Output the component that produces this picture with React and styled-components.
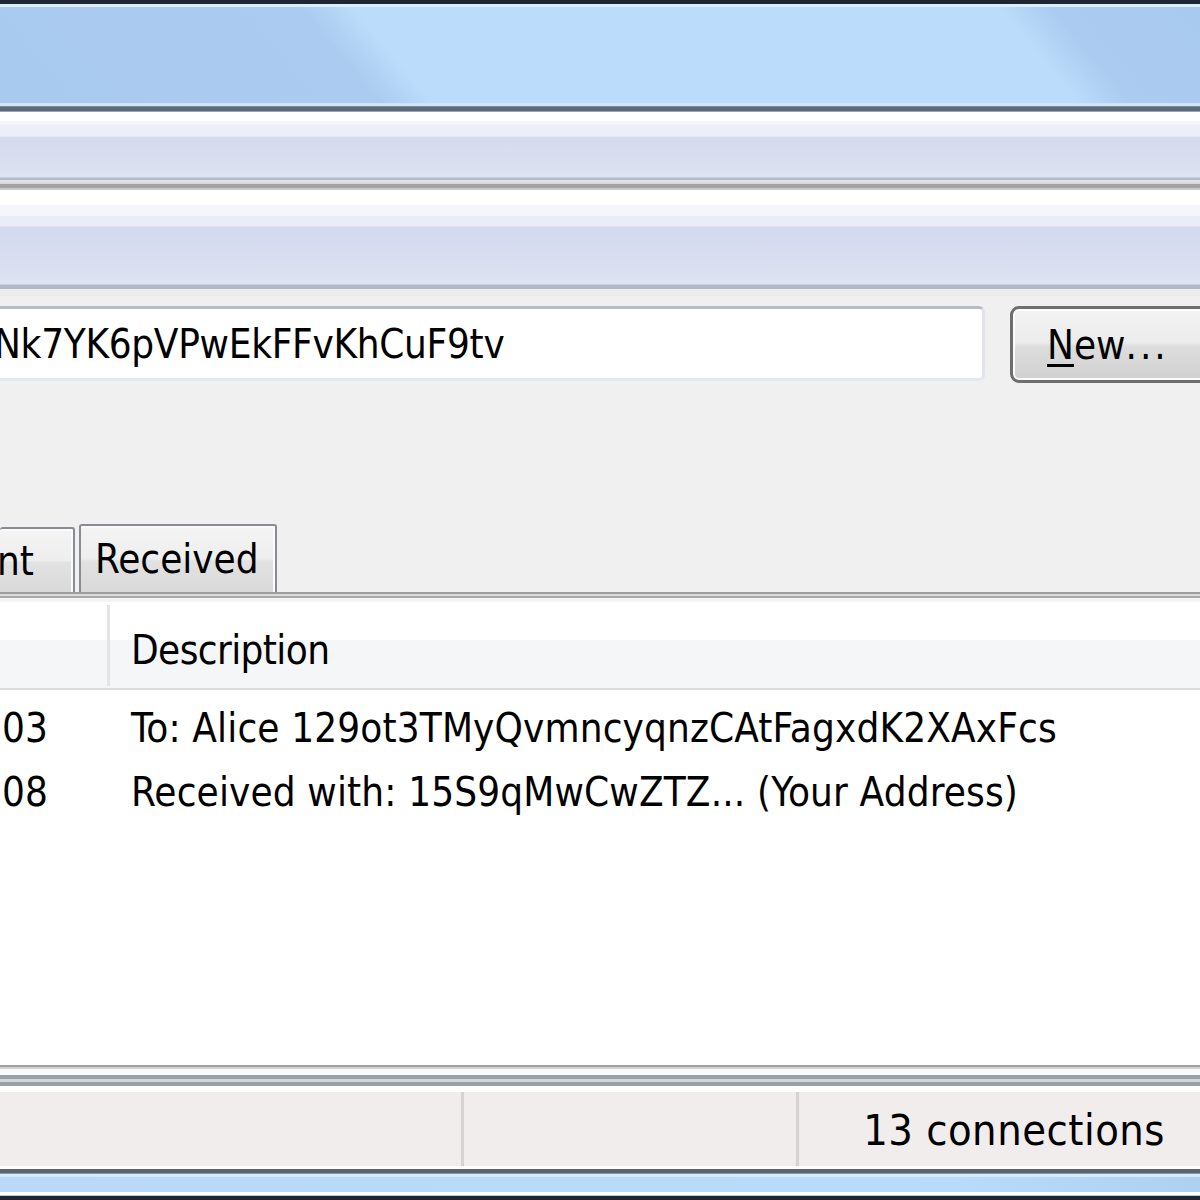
import React from "react";
import styled, { createGlobalStyle } from "styled-components";

const GlobalStyle = createGlobalStyle`
  html, body { margin: 0; padding: 0; background: #f0f0f0; }
  #root { width: 1200px; height: 1200px; }
`;

const Window = styled.div`
  width: 1200px;
  height: 1200px;
  overflow: hidden;
  display: flex;
  flex-direction: column;
  background: #f0f0f0;
  font-family: "DejaVu Sans Condensed", "DejaVu Sans", sans-serif;
  font-stretch: condensed;
  font-size: 40px;
  letter-spacing: 0;
  color: #000;
`;

const TitleBar = styled.div`
  flex: none;
  height: 112px;
  background:
    linear-gradient(
      to bottom,
      #1d2731 0 4px,
      #dcecfa 4px 7px,
      transparent 7px 103px,
      #cfe4f8 103px 106px,
      #7d8c9a 106px 107px,
      #5b6a78 107px 111px,
      #9aa7b3 111px 112px
    ),
    linear-gradient(
      50deg,
      #a9caef 0%,
      #abcbf0 30%,
      #bcdcfb 34%,
      #bcdcfb 84%,
      #abcbf0 88%,
      #a9caef 100%
    );
`;

const Rule = styled.div`
  flex: none;
  height: ${(p) => p.$h}px;
  background: ${(p) => p.$bg};
`;

const MenuBar = styled.div`
  flex: none;
  height: 70px;
  background: linear-gradient(
    to bottom,
    #ffffff 0 9px,
    #f4f6fb 9px 13px,
    #eceff7 13px 24px,
    #d5dbee 25px,
    #d9dfef 50px,
    #dfe4f3 65px,
    #b4bbca 66px 68px,
    #e3e3e3 68px 70px
  );
`;

const ToolBar = styled.div`
  flex: none;
  height: 106px;
  background: linear-gradient(
    to bottom,
    #ffffff 0 15px,
    #f4f6fb 15px 26px,
    #eaedf7 26px 36px,
    #d4daee 37px,
    #d8deef 70px,
    #dee3f3 94px,
    #b1b8c6 95px 99px,
    #ececec 99px 106px
  );
`;

const Content = styled.div`
  flex: none;
  height: 296px;
  box-sizing: border-box;
  padding-top: 10px;
  display: flex;
  flex-direction: column;
`;

const AddressRow = styled.div`
  display: flex;
  gap: 25px;
  height: 77px;
  margin: 0 -14px 0 -12px;
`;

const AddressField = styled.div`
  flex: 1;
  height: 75px;
  box-sizing: border-box;
  display: flex;
  align-items: center;
  padding-left: 3px;
  letter-spacing: -0.3px;
  background: #ffffff;
  border: 3px solid #e2e3ea;
  border-top-color: #b9bcc3;
  border-bottom-color: #e3e9ef;
  border-radius: 6px;
  white-space: nowrap;
  overflow: hidden;
`;

const Button = styled.div`
  flex: none;
  width: 204px;
  height: 77px;
  box-sizing: border-box;
  display: flex;
  align-items: center;
  padding-left: 34px;
  border: 3px solid #6e6e6e;
  border-radius: 9px;
  background: linear-gradient(#f3f3f3, #ececec 47%, #dddddd 53%, #d0d0d0);
  box-shadow: inset 0 0 0 2px #fbfbfb;
  white-space: nowrap;
`;

const Mnemonic = styled.span`
  text-decoration: underline;
  text-decoration-thickness: 3px;
  text-underline-offset: 5px;
`;

const Dots = styled.span`
  letter-spacing: 3px;
`;

const TabStrip = styled.div`
  margin-top: auto;
  height: 68px;
  display: flex;
  align-items: flex-end;
  gap: 4px;
`;

const Tab = styled.div`
  flex: none;
  box-sizing: border-box;
  width: ${(p) => p.$w}px;
  height: ${(p) => p.$h}px;
  display: flex;
  align-items: center;
  padding-left: ${(p) => p.$pad}px;
  border: 2px solid #898c95;
  border-bottom: none;
  ${(p) => (p.$cut ? "border-left: none;" : "")}
  border-radius: 3px 3px 0 0;
  background: linear-gradient(#f4f4f4, #eeeeee 50%, #e2e2e2 53%, #d9d9d9);
  box-shadow: inset 0 2px 0 #fbfbfb, inset -2px 0 0 #fbfbfb;
  white-space: nowrap;
  overflow: hidden;
`;

const TabLabel = styled.span`
  margin-left: ${(p) => p.$shift || 0}px;
`;

const List = styled.div`
  flex: 1;
  display: flex;
  flex-direction: column;
  background: #ffffff;
`;

const ListHeader = styled.div`
  flex: none;
  height: 88px;
  box-sizing: border-box;
  display: grid;
  grid-template-columns: 110px 1fr;
  background: linear-gradient(#ffffff 0 38px, #f5f6f7 38px);
  border-bottom: 2px solid #dadbdc;
`;

const HeaderCell = styled.div`
  box-sizing: border-box;
  padding: 10px 0 0 ${(p) => p.$pad}px;
  line-height: 76px;
  letter-spacing: -0.6px;
  ${(p) => (p.$sep ? "border-right: 3px solid #e4e4e4; margin: 3px 0 2px;" : "")}
`;

const ListBody = styled.div`
  padding-top: 6px;
`;

const Row = styled.div`
  display: grid;
  grid-template-columns: 110px 1fr;
  height: 64px;
  line-height: 64px;
  letter-spacing: 0.15px;
  white-space: nowrap;
`;

const Cell = styled.div`
  padding-left: ${(p) => p.$pad}px;
  overflow: hidden;
`;

const StatusBar = styled.div`
  flex: none;
  height: 74px;
  display: flex;
  background: #f0edec;
  font-size: 43px;
  letter-spacing: 0.5px;
`;

const StatusPane = styled.div`
  box-sizing: border-box;
  ${(p) => (p.$w ? `flex: none; width: ${p.$w}px;` : "flex: 1;")}
  display: flex;
  align-items: center;
  justify-content: flex-end;
  padding-top: 2px;
  padding-right: ${(p) => p.$padR || 0}px;
  ${(p) => (p.$sep ? "border-right: 3px solid #d6d4d3;" : "")}
`;

const FrameBottom = styled.div`
  flex: none;
  height: 34px;
  background:
    linear-gradient(
      to bottom,
      #ffffff 0 3px,
      #5a6571 3px 7px,
      #8796a3 7px 8px,
      #d6e9fa 8px 11px,
      transparent 11px 26px,
      #ffffff 26px 29px,
      #c0c8d0 29px 30px,
      #1d2731 30px 34px
    ),
    linear-gradient(to right, #bad9f8 0%, #b9dafa 80%, #b0d0f2 100%);
`;

const transactions = [
  { time: "03", text: "To: Alice 129ot3TMyQvmncyqnzCAtFagxdK2XAxFcs" },
  { time: "08", text: "Received with: 15S9qMwCwZTZ... (Your Address)" },
];

export default function App() {
  return (
    <>
      <GlobalStyle />
      <Window>
        <TitleBar />
        <MenuBar />
        <Rule
          $h={8}
          $bg="linear-gradient(#dadada 0 2px, #a3a3a3 2px 6px, #cacaca 6px 8px)"
        />
        <ToolBar />
        <Content>
          <AddressRow>
            <AddressField>Nk7YK6pVPwEkFFvKhCuF9tv</AddressField>
            <Button>
              <Mnemonic>N</Mnemonic>ew<Dots>...</Dots>
            </Button>
          </AddressRow>
          <TabStrip>
            <Tab $w={75} $h={65} $pad={0} $cut>
              <TabLabel $shift={-3}>nt</TabLabel>
            </Tab>
            <Tab $w={198} $h={68} $pad={14}>
              <TabLabel>Received</TabLabel>
            </Tab>
          </TabStrip>
        </Content>
        <Rule
          $h={10}
          $bg="linear-gradient(#9c9c9c 0 2px, #dadada 2px 4px, #a9a9a9 4px 6px, #f4f4f4 6px 10px)"
        />
        <List>
          <ListHeader>
            <HeaderCell $pad={0} $sep />
            <HeaderCell $pad={21}>Description</HeaderCell>
          </ListHeader>
          <ListBody>
            {transactions.map((t) => (
              <Row key={t.time}>
                <Cell $pad={2}>{t.time}</Cell>
                <Cell $pad={21}>{t.text}</Cell>
              </Row>
            ))}
          </ListBody>
        </List>
        <Rule
          $h={27}
          $bg="linear-gradient(#a0a0a0 0 2px, #d2d2d2 2px 4px, #fbfbfb 4px 10px, #9aa0a8 10px 14px, #d4d6da 14px 17px, #9aa0a8 17px 21px, #ffffff 21px 27px)"
        />
        <StatusBar>
          <StatusPane $w={464} $sep />
          <StatusPane $w={335} $sep />
          <StatusPane $padR={35}>13 connections</StatusPane>
        </StatusBar>
        <FrameBottom />
      </Window>
    </>
  );
}
